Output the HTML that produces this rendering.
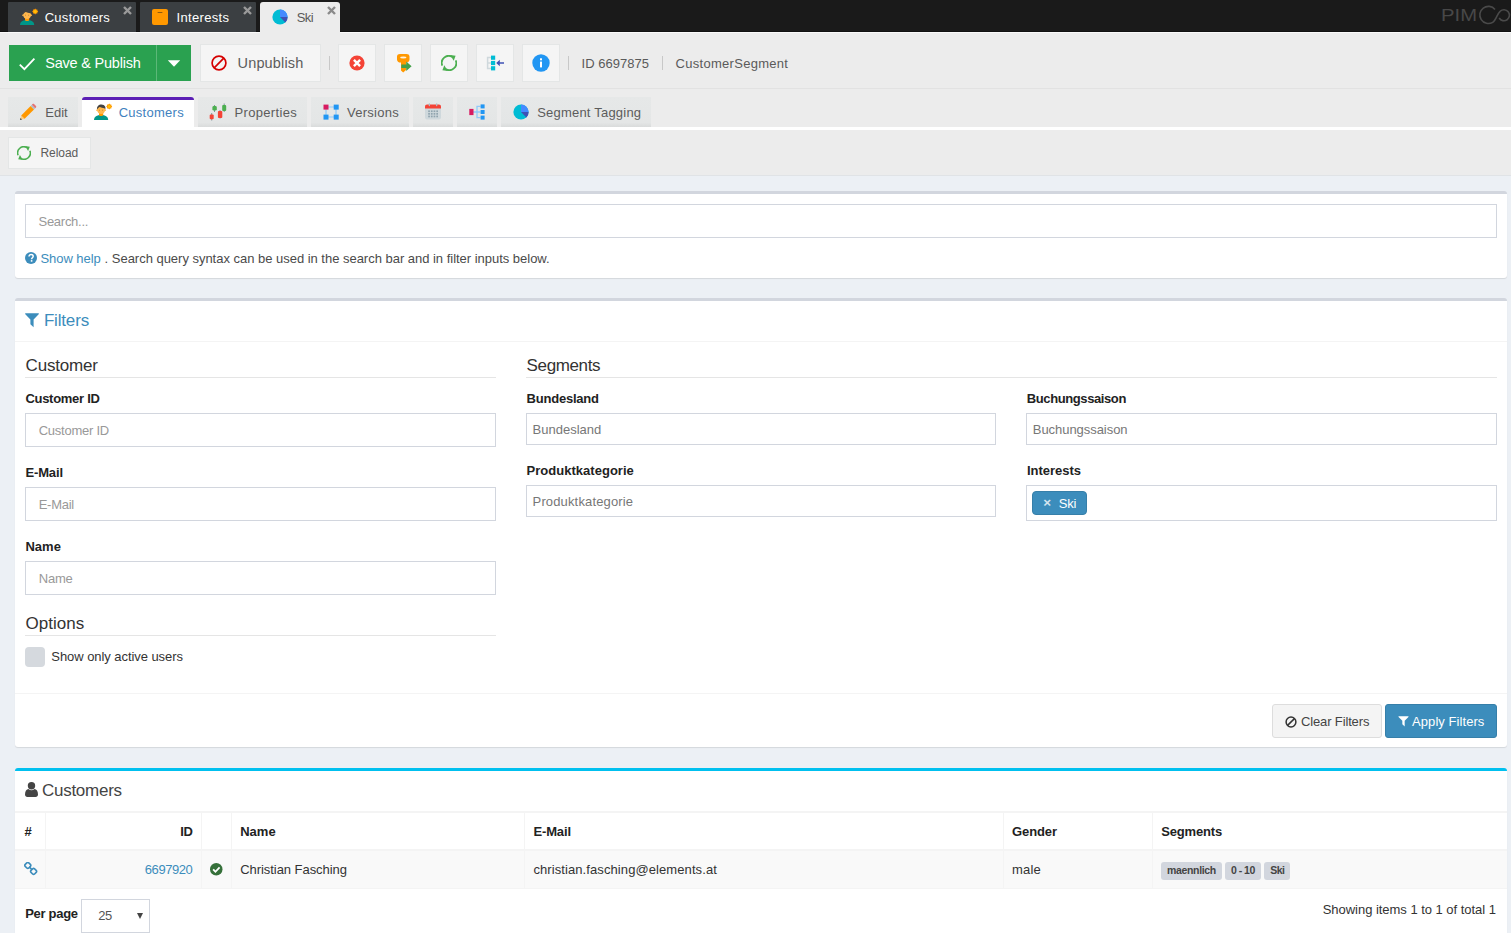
<!DOCTYPE html>
<html lang="en"><head><meta charset="utf-8"><title>Ski - CustomerSegment</title>
<style>
*{box-sizing:border-box;margin:0;padding:0}
html,body{width:1511px;height:933px;overflow:hidden;background:#ecf0f5;font-family:"Liberation Sans",sans-serif}
div,span,svg{position:absolute}
.t{white-space:pre;line-height:20px;height:20px}
#top{left:0;top:0;width:1511px;height:31px;background:#1a1a1a;border-bottom:1px solid #111;height:32px}
#topline{left:0;top:32px;width:1511px;height:1px;background:#fafafa}
.ttab{top:2px;height:30px;background:#3b3f42;border-radius:1px 1px 0 0}
.ttab.act{background:#ececec;height:31px;border-radius:3px 3px 0 0}
#tb{left:0;top:33px;width:1511px;height:56px;background:#ececec;border-bottom:1px solid #e2e2e2}
.btn{top:44px;height:38px;width:38px;background:#f5f5f5;border:1px solid #e4e6e6}
.sep{width:1px;background:#c8c8c8;top:56px;height:14px}
#strip{left:0;top:89px;width:1511px;height:38px;background:#ececec}
#wline{left:0;top:127px;width:1511px;height:3px;background:#fff}
.tab{top:97px;height:30px;background:linear-gradient(#e6e8e8 0,#e4e6e6 85%,#d9dbdb 100%)}
.tab.act{background:#fff;border-top:3px solid #5b1eb4;border-radius:3px 3px 0 0;height:31px}
#tb2{left:0;top:130px;width:1511px;height:46px;background:#ececec;border-bottom:1px solid #e0e3e6}
.box{left:15px;width:1492px;background:#fff;border-top:3px solid #d2d6de;border-radius:3px;box-shadow:0 1px 1px rgba(0,0,0,0.1)}
.inp{border:1px solid #d2d6de;background:#fff}
.hr{height:1px;background:#e5e5e5}
.vl{width:1px;background:#f4f4f4;top:42px;height:75px}
</style></head><body>
<div id="top"></div><div id="topline"></div>
<div class="ttab" style="left:8px;width:128px"></div>
<div class="ttab" style="left:140px;width:116px"></div>
<div class="ttab act" style="left:260px;width:80px"></div>
<div id="tb"></div>
<div style="left:9px;top:45px;width:182px;height:36px;background:#2aa150"></div>
<div style="left:156px;top:45px;width:1px;height:36px;background:#5cb878"></div>
<div class="btn" style="left:200px;width:121px"></div>
<div class="sep" style="left:329px"></div>
<div class="btn" style="left:338px"></div>
<div class="btn" style="left:384px"></div>
<div class="btn" style="left:430px"></div>
<div class="btn" style="left:476px"></div>
<div class="btn" style="left:522px"></div>
<div class="sep" style="left:568px"></div>
<div class="sep" style="left:662px"></div>
<div id="strip"></div><div id="wline"></div>
<div class="tab" style="left:8px;width:70px"></div>
<div class="tab act" style="left:82px;width:112px"></div>
<div class="tab" style="left:198px;width:109px"></div>
<div class="tab" style="left:311px;width:98px"></div>
<div class="tab" style="left:413px;width:40px"></div>
<div class="tab" style="left:457px;width:40px"></div>
<div class="tab" style="left:501px;width:150px"></div>
<div id="tb2"></div>
<div class="btn" style="left:8px;top:137px;width:83px;height:32px"></div>

<!-- search box -->
<div class="box" style="top:191px;height:87px">
  <div class="inp" style="left:10px;top:10px;width:1472px;height:34px"></div>
</div>
<!-- filters box -->
<div class="box" style="top:298px;height:449px">
  <div class="hr" style="left:0;top:40px;width:1492px;background:#f4f4f4"></div>
  <div class="hr" style="left:10px;top:76px;width:471px"></div>
  <div class="hr" style="left:511px;top:76px;width:971px"></div>
  <div class="hr" style="left:10px;top:334px;width:471px"></div>
  <div class="inp" style="left:10px;top:112px;width:471px;height:34px"></div>
  <div class="inp" style="left:10px;top:186px;width:471px;height:34px"></div>
  <div class="inp" style="left:10px;top:260px;width:471px;height:34px"></div>
  <div class="inp" style="left:511px;top:112px;width:470px;height:32px"></div>
  <div class="inp" style="left:511px;top:184px;width:470px;height:32px"></div>
  <div class="inp" style="left:1011px;top:112px;width:471px;height:32px"></div>
  <div class="inp" style="left:1011px;top:184px;width:471px;height:36px"></div>
  <div style="left:1017px;top:190px;width:55px;height:24px;background:#3c8dbc;border:1px solid #367fa9;border-radius:4px"></div>
  <div style="left:10px;top:346px;width:20px;height:20px;background:#d5d9de;border-radius:4px"></div>
  <div class="hr" style="left:0;top:392px;width:1492px;background:#f4f4f4"></div>
  <div style="left:1257px;top:403px;width:110px;height:34px;background:#f4f4f4;border:1px solid #ddd;border-radius:3px"></div>
  <div style="left:1370px;top:403px;width:112px;height:34px;background:#3c8dbc;border:1px solid #367fa9;border-radius:3px"></div>
</div>
<!-- customers box -->
<div class="box" style="top:768px;height:200px;border-top-color:#00c0ef">
  <div class="hr" style="left:0;top:40px;width:1492px;height:2px;background:#f4f4f4"></div>
  <div style="left:0;top:78px;width:1492px;height:40px;background:#f9f9f9;border-top:2px solid #f4f4f4;border-bottom:1px solid #f4f4f4"></div>
  <div class="vl" style="left:30px"></div>
  <div class="vl" style="left:186px"></div>
  <div class="vl" style="left:216px"></div>
  <div class="vl" style="left:509px"></div>
  <div class="vl" style="left:988px"></div>
  <div class="vl" style="left:1137px"></div>
  <div style="left:1146px;top:91px;width:61px;height:18px;background:#d2d6de;border-radius:3px"></div>
  <div style="left:1210px;top:91px;width:36px;height:18px;background:#d2d6de;border-radius:3px"></div>
  <div style="left:1249px;top:91px;width:26px;height:18px;background:#d2d6de;border-radius:3px"></div>
  <div class="inp" style="left:66px;top:128px;width:69px;height:34px"></div>
  <div style="left:122px;top:142px;width:0;height:0;border-left:3px solid transparent;border-right:3px solid transparent;border-top:6px solid #444"></div>
</div>


<!-- top tab icons -->
<svg style="left:20px;top:9px;overflow:visible" width="20" height="16" viewBox="0 0 20 16"><g>
  <path d="M0 16 C0 12.6 3 10.9 7.1 10.9 C11.2 10.9 14.2 12.6 14.2 16 Z" fill="#009688"/>
  <path d="M5 8.6 h4.2 v2.5 c0 1.3 -4.2 1.3 -4.2 0 Z" fill="#ff9800"/>
  <ellipse cx="7.1" cy="5.8" rx="4.1" ry="4.2" fill="#ffb74d"/>
  <circle cx="2.9" cy="6.2" r=".8" fill="#ffb74d"/><circle cx="11.3" cy="6.2" r=".8" fill="#ffb74d"/>
  <path d="M3 5.4 C2.8 2.4 4.8 .6 7.3 .6 C9.3 .6 10.5 1.4 10.6 2 C11.5 2.3 11.7 4 11.2 5.4 L10.5 4.2 C8.8 4 6.8 3.4 5.6 3 C4.6 3.4 3.9 4.2 3 5.4 Z" fill="#424242"/>
  <circle cx="5.5" cy="6.1" r=".45" fill="#784719"/><circle cx="8.7" cy="6.1" r=".45" fill="#784719"/>
  <path d="M15.20 -0.50 L16.08 0.38 L17.32 0.38 L17.32 1.62 L18.20 2.50 L17.32 3.38 L17.32 4.62 L16.08 4.62 L15.20 5.50 L14.32 4.62 L13.08 4.62 L13.08 3.38 L12.20 2.50 L13.08 1.62 L13.08 0.38 L14.32 0.38 Z" fill="#ff9800"/>
  <circle cx="15.2" cy="2.5" r="1.5" fill="#ffc107"/>
</g></svg>
<svg style="left:152px;top:9px" width="16" height="16" viewBox="0 0 16 16"><rect x="0" y="0" width="16" height="16" rx="2" fill="#ff9800"/><rect x="5.5" y="3" width="5" height="1" rx=".5" fill="#8d5a10"/></svg>
<svg style="left:272px;top:9px" width="16" height="16" viewBox="0 0 16 16"><g>
  <circle cx="8" cy="8" r="7.6" fill="#00bcd4"/>
  <path d="M8 8 V.4 A7.6 7.6 0 0 1 15.6 8 Z" fill="#448aff"/>
  <path d="M8 8 H15.6 A7.6 7.6 0 0 1 13.4 13.4 Z" fill="#3f51b5"/>
</g></svg>
<!-- close x -->
<svg style="left:123px;top:6px" width="9" height="9" viewBox="0 0 9 9"><path d="M1 1 L8 8 M8 1 L1 8" stroke="#9a9a9a" stroke-width="2.4"/></svg>
<svg style="left:243px;top:6px" width="9" height="9" viewBox="0 0 9 9"><path d="M1 1 L8 8 M8 1 L1 8" stroke="#9a9a9a" stroke-width="2.4"/></svg>
<svg style="left:327px;top:6px" width="9" height="9" viewBox="0 0 9 9"><path d="M1 1 L8 8 M8 1 L1 8" stroke="#8a8a8a" stroke-width="2.4"/></svg>
<!-- pimcore logo -->
<svg style="left:1436px;top:2px" width="75" height="28" viewBox="0 0 75 28">
  <text x="5" y="19.3" font-family="Liberation Sans,sans-serif" font-size="16.5" fill="#484848" textLength="36" lengthAdjust="spacingAndGlyphs" style="font-weight:normal">PIM</text>
  <path d="M59 7.4 A8.6 8.6 0 1 0 56.7 20.4 C60 18.6 61 12 64.1 9.3 A5.5 5.5 0 1 1 63.2 16" fill="none" stroke="#4a4a4a" stroke-width="1.6"/>
</svg>
<!-- toolbar icons -->
<svg style="left:19px;top:56px" width="17" height="16" viewBox="0 0 17 16"><path d="M.8 8.6 L5.4 13.2 L15.4 2.6" fill="none" stroke="#fff" stroke-width="1.8"/></svg>
<svg style="left:167px;top:60px" width="14" height="7" viewBox="0 0 14 7"><path d="M.8 .3 H13.2 L7 6.7 Z" fill="#fff"/></svg>
<svg style="left:211px;top:55px" width="16" height="16" viewBox="0 0 16 16"><circle cx="8" cy="8" r="6.9" fill="none" stroke="#d50000" stroke-width="1.7"/><path d="M3.2 12.8 L12.8 3.2" stroke="#d50000" stroke-width="1.7"/></svg>
<svg style="left:349px;top:55px" width="16" height="16" viewBox="0 0 16 16"><circle cx="8" cy="8" r="7.6" fill="#f44336"/><path d="M4.9 4.9 L11.1 11.1 M11.1 4.9 L4.9 11.1" stroke="#fff" stroke-width="2.4"/></svg>
<svg style="left:395px;top:53px" width="18" height="20" viewBox="0 0 18 20">
  <path d="M2 3.5 C2 1.8 3.3 1 5 1 H11.5 C13.2 1 14.5 1.8 14.5 3.5 V6.5 C14.5 8.5 13 9.6 11 9.6 V17 L8.2 19.4 L6 17.4 V9.6 H5.5 C3.5 9.6 2 8.5 2 6.5 Z" fill="#ff9800"/>
  <ellipse cx="8.3" cy="4.4" rx="3.2" ry="1" fill="#fff3e0"/>
  <path d="M6.3 11.6 H11.2 V8.6 L16.6 13.3 L11.2 18 V15 H6.3 Z" fill="#43a047"/>
</svg>
<svg style="left:441px;top:55px" width="16" height="16" viewBox="0 0 16 16"><g fill="none" stroke="#4caf50" stroke-width="1.8">
  <path d="M1.3 10.6 A7 7 0 0 1 11.4 1.9"/>
  <path d="M14.7 5.4 A7 7 0 0 1 4.6 14.1"/>
  <path d="M9.3 .1 L14.6 .8 L12.7 5.7 Z" fill="#4caf50" stroke="none"/>
  <path d="M6.7 15.9 L1.4 15.2 L3.3 10.3 Z" fill="#4caf50" stroke="none"/>
</g></svg>
<svg style="left:486px;top:55px" width="19" height="16" viewBox="0 0 19 16">
  <path d="M5 2.5 H1.6 V13.5 H5 M1.6 8 H5" fill="none" stroke="#cfd8dc" stroke-width="1.5"/>
  <rect x="5" y=".6" width="4.2" height="4.2" fill="#00bcd4"/><rect x="5" y="5.9" width="4.2" height="4.2" fill="#00bcd4"/><rect x="5" y="11.2" width="4.2" height="4.2" fill="#00bcd4"/>
  <path d="M10.2 8 L13.8 4.8 V7.2 H18 V8.8 H13.8 V11.2 Z" fill="#3f51b5"/>
</svg>
<svg style="left:532px;top:54px" width="18" height="18" viewBox="0 0 18 18"><circle cx="9" cy="9" r="8.7" fill="#2196f3"/><rect x="8" y="7.6" width="2" height="5.8" fill="#fff"/><rect x="8" y="4.3" width="2" height="2" fill="#fff"/></svg>
<!-- tab icons -->
<svg style="left:19px;top:103px" width="18" height="18" viewBox="0 0 18 18">
  <path d="M1 17 L2.2 12.4 L5.6 15.8 Z" fill="#ffcc80"/>
  <path d="M1 17 L1.5 15 L3 16.5 Z" fill="#37474f"/>
  <path d="M2.2 12.4 L11.6 3 L15 6.4 L5.6 15.8 Z" fill="#ff9800"/>
  <path d="M11.6 3 L12.8 1.8 L16.2 5.2 L15 6.4 Z" fill="#b0bec5"/>
  <path d="M12.8 1.8 L13.6 1 C14 .6 14.6 .6 15 1 L17 3 C17.4 3.4 17.4 4 17 4.4 L16.2 5.2 Z" fill="#e57373"/>
</svg>
<svg style="left:94px;top:104px;overflow:visible" width="20" height="16" viewBox="0 0 20 16"><g>
  <path d="M0 16 C0 12.6 3 10.9 7.1 10.9 C11.2 10.9 14.2 12.6 14.2 16 Z" fill="#009688"/>
  <path d="M5 8.6 h4.2 v2.5 c0 1.3 -4.2 1.3 -4.2 0 Z" fill="#ff9800"/>
  <ellipse cx="7.1" cy="5.8" rx="4.1" ry="4.2" fill="#ffb74d"/>
  <circle cx="2.9" cy="6.2" r=".8" fill="#ffb74d"/><circle cx="11.3" cy="6.2" r=".8" fill="#ffb74d"/>
  <path d="M3 5.4 C2.8 2.4 4.8 .6 7.3 .6 C9.3 .6 10.5 1.4 10.6 2 C11.5 2.3 11.7 4 11.2 5.4 L10.5 4.2 C8.8 4 6.8 3.4 5.6 3 C4.6 3.4 3.9 4.2 3 5.4 Z" fill="#424242"/>
  <circle cx="5.5" cy="6.1" r=".45" fill="#784719"/><circle cx="8.7" cy="6.1" r=".45" fill="#784719"/>
  <path d="M15.20 -0.50 L16.08 0.38 L17.32 0.38 L17.32 1.62 L18.20 2.50 L17.32 3.38 L17.32 4.62 L16.08 4.62 L15.20 5.50 L14.32 4.62 L13.08 4.62 L13.08 3.38 L12.20 2.50 L13.08 1.62 L13.08 0.38 L14.32 0.38 Z" fill="#ff9800"/>
  <circle cx="15.2" cy="2.5" r="1.5" fill="#ffc107"/>
</g></svg>
<svg style="left:209px;top:103px" width="18" height="18" viewBox="0 0 18 18">
  <path d="M2.7 10 V17.5 M5.5 2 V9 M11 7 V15.5 M15.2 .5 V9" stroke="#546e7a" stroke-width=".7"/>
  <rect x=".7" y="11.4" width="4" height="4.8" rx="1" fill="#f44336"/>
  <rect x="3.4" y="3" width="4.4" height="4.6" rx="1.4" fill="#4caf50"/>
  <rect x="8.9" y="8" width="4.4" height="7" rx="1" fill="#f44336"/>
  <rect x="13.2" y="2" width="4" height="6" rx="1" fill="#4caf50"/>
</svg>
<svg style="left:323px;top:104px" width="16" height="16" viewBox="0 0 16 16">
  <path d="M3 3 H13 V13 H3 Z" fill="none" stroke="#90caf9" stroke-width="1.2"/>
  <rect x=".5" y=".6" width="5" height="5" fill="#d81b60"/><rect x="10.7" y=".6" width="5" height="5" fill="#2196f3"/>
  <rect x=".5" y="10.6" width="5" height="5" fill="#2196f3"/><rect x="10.7" y="10.6" width="5" height="5" fill="#2196f3"/>
</svg>
<svg style="left:425px;top:103px" width="16" height="17" viewBox="0 0 16 17">
  <path d="M0 5 H16 V14.5 C16 15.6 15.1 16.4 14 16.4 H2 C.9 16.4 0 15.6 0 14.5 Z" fill="#cfd8dc"/>
  <path d="M0 5.4 V3.5 C0 2.4 .9 1.6 2 1.6 H14 C15.1 1.6 16 2.4 16 3.5 V5.4 Z" fill="#f44336"/>
  <rect x="3.7" y=".2" width="1.3" height="3" rx=".6" fill="#b0bec5"/><rect x="11" y=".2" width="1.3" height="3" rx=".6" fill="#b0bec5"/>
  <g fill="#90a4ae"><rect x="3.2" y="7.4" width="1.7" height="1.7"/><rect x="5.9" y="7.4" width="1.7" height="1.7"/><rect x="8.6" y="7.4" width="1.7" height="1.7"/><rect x="11.3" y="7.4" width="1.7" height="1.7"/>
  <rect x="3.2" y="10" width="1.7" height="1.7"/><rect x="5.9" y="10" width="1.7" height="1.7"/><rect x="8.6" y="10" width="1.7" height="1.7"/><rect x="11.3" y="10" width="1.7" height="1.7"/>
  <rect x="3.2" y="12.6" width="1.7" height="1.7"/><rect x="5.9" y="12.6" width="1.7" height="1.7"/><rect x="8.6" y="12.6" width="1.7" height="1.7"/><rect x="11.3" y="12.6" width="1.7" height="1.7"/></g>
</svg>
<svg style="left:469px;top:104px" width="16" height="16" viewBox="0 0 16 16">
  <path d="M4 8 H8 M11.5 2.4 H8 V13.6 H11.5 M8 8 H11.5" fill="none" stroke="#90caf9" stroke-width="1.3"/>
  <rect x=".3" y="4.9" width="4.2" height="6.2" fill="#d81b60"/>
  <rect x="11.6" y=".4" width="4" height="4" fill="#2196f3"/><rect x="11.6" y="6" width="4" height="4" fill="#2196f3"/><rect x="11.6" y="11.6" width="4" height="4" fill="#2196f3"/>
</svg>
<svg style="left:513px;top:104px" width="16" height="16" viewBox="0 0 16 16"><g>
  <circle cx="8" cy="8" r="7.6" fill="#00bcd4"/>
  <path d="M8 8 V.4 A7.6 7.6 0 0 1 15.6 8 Z" fill="#448aff"/>
  <path d="M8 8 H15.6 A7.6 7.6 0 0 1 13.4 13.4 Z" fill="#3f51b5"/>
</g></svg>
<svg style="left:17px;top:146px" width="14" height="14" viewBox="0 0 16 16"><g fill="none" stroke="#4caf50" stroke-width="1.8">
  <path d="M1.3 10.6 A7 7 0 0 1 11.4 1.9"/>
  <path d="M14.7 5.4 A7 7 0 0 1 4.6 14.1"/>
  <path d="M9.3 .1 L14.6 .8 L12.7 5.7 Z" fill="#4caf50" stroke="none"/>
  <path d="M6.7 15.9 L1.4 15.2 L3.3 10.3 Z" fill="#4caf50" stroke="none"/>
</g></svg>
<!-- content icons (font-awesome like) -->
<svg style="left:25px;top:252px" width="12" height="12" viewBox="0 0 12 12"><circle cx="6" cy="6" r="6" fill="#3c8dbc"/><path d="M4 4.6 C4 3.2 5 2.5 6.1 2.5 C7.3 2.5 8.2 3.2 8.2 4.3 C8.2 5.8 6.6 5.8 6.6 7.2" fill="none" stroke="#fff" stroke-width="1.5"/><rect x="5.8" y="8.1" width="1.6" height="1.6" fill="#fff"/></svg>
<svg style="left:25px;top:313px" width="14" height="15" viewBox="0 0 14 15"><path d="M.3 .3 H13.7 C14 .8 13.9 1 13.7 1.3 L8.6 6.6 V14.2 L5.4 11.2 V6.6 L.3 1.3 C.1 1 0 .8 .3 .3 Z" fill="#3c8dbc"/></svg>
<svg style="left:1285px;top:716px" width="12" height="12" viewBox="0 0 12 12"><circle cx="6" cy="6" r="4.9" fill="none" stroke="#333" stroke-width="1.5"/><path d="M2.6 9.4 L9.4 2.6" stroke="#333" stroke-width="1.5"/></svg>
<svg style="left:1398px;top:716px" width="11" height="11" viewBox="0 0 14 15"><path d="M.3 .3 H13.7 C14 .8 13.9 1 13.7 1.3 L8.6 6.6 V14.2 L5.4 11.2 V6.6 L.3 1.3 C.1 1 0 .8 .3 .3 Z" fill="#fff"/></svg>
<svg style="left:25px;top:782px" width="13" height="15" viewBox="0 0 13 15"><circle cx="6.5" cy="3.8" r="3.7" fill="#444"/><path d="M0 12.5 C0 9 1.5 7.2 3.5 7 C4.4 7.8 5.4 8.2 6.5 8.2 C7.6 8.2 8.6 7.8 9.5 7 C11.5 7.2 13 9 13 12.5 C13 14 12 15 10.6 15 H2.4 C1 15 0 14 0 12.5 Z" fill="#444"/></svg>
<svg style="left:24px;top:862px" width="14" height="14" viewBox="0 0 14 14" fill="none" stroke="#3c8dbc" stroke-width="1.6"><rect x="1.3" y=".9" width="5" height="5" rx="1.4" transform="rotate(45 3.8 3.4)"/><rect x="7.1" y="6.9" width="5" height="5" rx="1.4" transform="rotate(45 9.6 9.4)"/><path d="M5.2 4.9 L8.2 7.9"/></svg>
<svg style="left:210px;top:863px" width="12.5" height="12.5" viewBox="0 0 12 12"><circle cx="6" cy="6" r="6" fill="#35703a"/><path d="M3 6.2 L5.2 8.4 L9.2 4.2" fill="none" stroke="#fff" stroke-width="1.7"/></svg>

<span class="t" style="left:44.7px;top:8.0px;font-size:13px;color:#fff;letter-spacing:0.28px;">Customers</span>
<span class="t" style="left:176.6px;top:8.0px;font-size:13px;color:#fff;letter-spacing:0.32px;">Interests</span>
<span class="t" style="left:296.7px;top:8.0px;font-size:13px;color:#5a5a5a;letter-spacing:-0.59px;">Ski</span>
<span class="t" style="left:45.2px;top:53.0px;font-size:14.5px;color:#fff;letter-spacing:-0.21px;">Save &amp; Publish</span>
<span class="t" style="left:237.6px;top:53.0px;font-size:14.5px;color:#5c5c5c;letter-spacing:0.14px;">Unpublish</span>
<span class="t" style="left:581.5px;top:54.0px;font-size:13px;color:#5a5a5a;letter-spacing:0.03px;">ID 6697875</span>
<span class="t" style="left:675.5px;top:54.0px;font-size:13px;color:#5a5a5a;letter-spacing:0.29px;">CustomerSegment</span>
<span class="t" style="left:45.3px;top:103.0px;font-size:13px;color:#5c5c5c;letter-spacing:-0.03px;">Edit</span>
<span class="t" style="left:118.7px;top:103.0px;font-size:13px;color:#4282be;letter-spacing:0.27px;">Customers</span>
<span class="t" style="left:234.5px;top:103.0px;font-size:13px;color:#5c5c5c;letter-spacing:0.33px;">Properties</span>
<span class="t" style="left:347.0px;top:103.0px;font-size:13px;color:#5c5c5c;letter-spacing:0.27px;">Versions</span>
<span class="t" style="left:537.2px;top:103.0px;font-size:13px;color:#5c5c5c;letter-spacing:0.21px;">Segment Tagging</span>
<span class="t" style="left:40.5px;top:143.0px;font-size:12px;color:#5c5c5c;letter-spacing:-0.07px;">Reload</span>
<span class="t" style="left:38.5px;top:212.0px;font-size:13px;color:#999;letter-spacing:-0.27px;">Search...</span>
<span class="t" style="left:40.5px;top:249.0px;font-size:13px;color:#3c8dbc;letter-spacing:-0.06px;">Show help</span>
<span class="t" style="left:104.6px;top:249.0px;font-size:13px;color:#4a4a4a;letter-spacing:-0.02px;">. Search query syntax can be used in the search bar and in filter inputs below.</span>
<span class="t" style="left:43.9px;top:311.0px;font-size:17px;color:#3c8dbc;letter-spacing:-0.17px;">Filters</span>
<span class="t" style="left:25.6px;top:356.0px;font-size:17px;color:#333;letter-spacing:-0.20px;">Customer</span>
<span class="t" style="left:526.6px;top:356.0px;font-size:17px;color:#333;letter-spacing:-0.37px;">Segments</span>
<span class="t" style="left:25.6px;top:614.0px;font-size:17px;color:#333;letter-spacing:0.02px;">Options</span>
<span class="t" style="left:25.4px;top:389.0px;font-size:13px;color:#222;font-weight:bold;letter-spacing:-0.28px;">Customer ID</span>
<span class="t" style="left:25.4px;top:463.0px;font-size:13px;color:#222;font-weight:bold;letter-spacing:-0.13px;">E-Mail</span>
<span class="t" style="left:25.4px;top:537.0px;font-size:13px;color:#222;font-weight:bold;letter-spacing:0.04px;">Name</span>
<span class="t" style="left:526.6px;top:389.0px;font-size:13px;color:#222;font-weight:bold;letter-spacing:-0.22px;">Bundesland</span>
<span class="t" style="left:526.6px;top:461.0px;font-size:13px;color:#222;font-weight:bold;letter-spacing:0.02px;">Produktkategorie</span>
<span class="t" style="left:1026.8px;top:389.0px;font-size:13px;color:#222;font-weight:bold;letter-spacing:-0.40px;">Buchungssaison</span>
<span class="t" style="left:1026.9px;top:461.0px;font-size:13px;color:#222;font-weight:bold;letter-spacing:-0.02px;">Interests</span>
<span class="t" style="left:38.7px;top:421.0px;font-size:13px;color:#999;letter-spacing:-0.25px;">Customer ID</span>
<span class="t" style="left:38.7px;top:495.0px;font-size:13px;color:#999;letter-spacing:-0.27px;">E-Mail</span>
<span class="t" style="left:38.7px;top:569.0px;font-size:13px;color:#999;letter-spacing:-0.17px;">Name</span>
<span class="t" style="left:532.6px;top:420.0px;font-size:13px;color:#777;">Bundesland</span>
<span class="t" style="left:532.6px;top:492.0px;font-size:13px;color:#777;letter-spacing:0.14px;">Produktkategorie</span>
<span class="t" style="left:1032.8px;top:420.0px;font-size:13px;color:#777;letter-spacing:-0.05px;">Buchungssaison</span>
<span class="t" style="left:51.3px;top:647.0px;font-size:13px;color:#333;letter-spacing:-0.06px;">Show only active users</span>
<span class="t" style="left:1043.2px;top:493.0px;font-size:13.5px;color:#d3e4ef;font-weight:bold;">×</span>
<span class="t" style="left:1058.7px;top:494.0px;font-size:13px;color:#fff;letter-spacing:-0.12px;">Ski</span>
<span class="t" style="left:1301.0px;top:712.0px;font-size:13px;color:#444;letter-spacing:-0.14px;">Clear Filters</span>
<span class="t" style="left:1412.1px;top:712.0px;font-size:13px;color:#fff;letter-spacing:0.06px;">Apply Filters</span>
<span class="t" style="left:42.0px;top:781.0px;font-size:17px;color:#444;letter-spacing:-0.27px;">Customers</span>
<span class="t" style="left:24.6px;top:822.0px;font-size:13px;color:#222;font-weight:bold;">#</span>
<span class="t" style="left:180.3px;top:822.0px;font-size:13px;color:#222;font-weight:bold;letter-spacing:-0.45px;">ID</span>
<span class="t" style="left:240.2px;top:822.0px;font-size:13px;color:#222;font-weight:bold;letter-spacing:0.02px;">Name</span>
<span class="t" style="left:533.4px;top:822.0px;font-size:13px;color:#222;font-weight:bold;letter-spacing:-0.12px;">E-Mail</span>
<span class="t" style="left:1012.0px;top:822.0px;font-size:13px;color:#222;font-weight:bold;letter-spacing:-0.09px;">Gender</span>
<span class="t" style="left:1161.2px;top:822.0px;font-size:13px;color:#222;font-weight:bold;letter-spacing:-0.17px;">Segments</span>
<span class="t" style="left:144.8px;top:860.0px;font-size:13px;color:#3c8dbc;letter-spacing:-0.43px;">6697920</span>
<span class="t" style="left:240.2px;top:860.0px;font-size:13px;color:#333;letter-spacing:-0.05px;">Christian Fasching</span>
<span class="t" style="left:533.4px;top:860.0px;font-size:13px;color:#333;letter-spacing:0.09px;">christian.fasching@elements.at</span>
<span class="t" style="left:1012.0px;top:860.0px;font-size:13px;color:#333;letter-spacing:0.20px;">male</span>
<span class="t" style="left:1167.1px;top:860.0px;font-size:10.5px;color:#444;font-weight:bold;letter-spacing:-0.36px;">maennlich</span>
<span class="t" style="left:1230.9px;top:860.0px;font-size:10.5px;color:#444;font-weight:bold;letter-spacing:-0.49px;">0 - 10</span>
<span class="t" style="left:1270.2px;top:860.0px;font-size:10.5px;color:#444;font-weight:bold;letter-spacing:-0.56px;">Ski</span>
<span class="t" style="left:25.2px;top:904.0px;font-size:13px;color:#222;font-weight:bold;letter-spacing:-0.29px;">Per page</span>
<span class="t" style="left:98.2px;top:906.0px;font-size:13px;color:#555;letter-spacing:-0.43px;">25</span>
<span class="t" style="left:1322.7px;top:900.0px;font-size:13px;color:#333;letter-spacing:-0.03px;">Showing items 1 to 1 of total 1</span>
</body></html>
